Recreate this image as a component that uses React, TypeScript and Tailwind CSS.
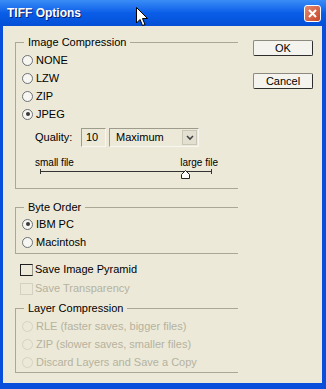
import React from 'react';

const font = { fontFamily: '"Liberation Sans", Arial, sans-serif' };

type GroupProps = { title: string; className?: string; children: React.ReactNode; bodyClass?: string };

// group box: etched left/top/bottom lines, legend sits on the top line
const Group = ({ title, className = '', bodyClass = '', children }: GroupProps) => (
	<div className={className}>
		<div className="flex items-center h-[12px]">
			<div className="w-[9px] border-t border-[#a9a796]" />
			<span className="px-[4px] leading-none text-black">{title}</span>
			<div className="flex-1 border-t border-[#a9a796]" />
		</div>
		<div className={`border-l border-b border-[#a9a796] -mt-[6px] pt-[6px] ${bodyClass}`}>
			{children}
		</div>
	</div>
);

const Radio = ({ label, checked = false, disabled = false, h = 'h-[18px]' }: { label: string; checked?: boolean; disabled?: boolean; h?: string }) => (
	<div className={`flex items-center gap-[3px] pl-[6px] ${h}`}>
		<span
			className={`w-[11px] h-[11px] rounded-full border flex items-center justify-center ${
				disabled ? 'border-[#d6d3c4] bg-[#ece9d8]' : 'border-[#6d7178] bg-[#f7f6f1]'
			}`}
		>
			{checked && <span className="w-[4px] h-[4px] rounded-full bg-[#3a3a3a]" />}
		</span>
		<span className={disabled ? 'text-[#b5b29f]' : 'text-black'}>{label}</span>
	</div>
);

const Cursor = () => (
	<svg className="absolute left-[136px] top-[7px]" width="13" height="21" viewBox="0 0 13 21">
		<path d="M0.5 0.5 L0.5 16 L4 12.5 L6.5 18.5 L9 17.5 L6.5 11.5 L11.5 11.5 Z" fill="#fff" stroke="#000" strokeWidth="1" />
	</svg>
);

const Button = ({ children, className = '' }: { children: React.ReactNode; className?: string }) => (
	<div
		className={`w-[60px] h-[16px] flex items-center justify-center rounded-[2px] border border-[#8c8a80] border-r-[#2e2e2e] border-b-[#2e2e2e] bg-[#f4f3ee] text-black ${className}`}
	>
		{children}
	</div>
);

export default function App() {
	return (
		<div className="relative w-[326px] h-[389px] bg-[#0a4fdc] flex flex-col text-[11px] overflow-hidden" style={font}>
			{/* title bar */}
			<div className="h-[26px] flex items-center justify-between pl-[7px] pr-[5px] bg-gradient-to-b from-[#3a8cf6] via-[#0a5de8] to-[#0450d6]">
				<span className="text-white font-bold text-[12px] [text-shadow:1px_1px_0_#0a1f6a]">TIFF Options</span>
				<div className="w-[17px] h-[17px] rounded-[3px] border border-white bg-gradient-to-br from-[#e58a6e] to-[#c64323] flex items-center justify-center">
					<svg width="9" height="9" viewBox="0 0 9 9">
						<path d="M1 1 L8 8 M8 1 L1 8" stroke="#fff" strokeWidth="2" />
					</svg>
				</div>
			</div>
			<Cursor />

			{/* client area */}
			<div className="flex-1 ml-[3px] mr-[4px] mb-[6px] bg-[#ece9d8] flex pl-[12px] pr-[9px] pt-[10px]">
				<div className="w-[223px] flex flex-col">
					<Group title="Image Compression" bodyClass="pt-[9px] pb-[8px]">
						<Radio label="NONE" />
						<Radio label="LZW" />
						<Radio label="ZIP" />
						<Radio label="JPEG" checked />
						<div className="flex items-center mt-[5px] h-[19px] pl-[19px]">
							<span className="w-[46px]">Quality:</span>
							<div className="w-[25px] h-[19px] border border-[#9d9b8c] border-r-[#f7f6f1] border-b-[#f7f6f1] flex items-center pl-[4px]">10</div>
							<div className="ml-[3px] w-[90px] h-[19px] border border-[#9d9b8c] border-r-[#f7f6f1] border-b-[#f7f6f1] flex items-center justify-between pl-[6px] pr-[1px]">
								<span>Maximum</span>
								<span className="w-[15px] h-[15px] bg-[#e3e0d2] border border-[#c9c6b6] flex items-center justify-center">
									<svg width="8" height="6" viewBox="0 0 8 6">
										<path d="M1 1 L4 4 L7 1" fill="none" stroke="#444" strokeWidth="1.6" />
									</svg>
								</span>
							</div>
						</div>
						<div className="flex justify-between items-center h-[12px] mt-[9px] pl-[19px] w-[202px] text-[10px]">
							<span>small file</span>
							<span>large file</span>
						</div>
						<div className="relative h-[12px] ml-[24px] w-[172px]">
							<div className="absolute left-0 right-0 top-[3px] border-t border-[#333]" />
							<div className="absolute left-0 top-[1px] h-[5px] border-l border-[#333]" />
							<div className="absolute right-0 top-[1px] h-[5px] border-l border-[#333]" />
							<svg className="absolute left-[141px] top-[2px]" width="9" height="9" viewBox="0 0 9 9">
								<path d="M4.5 0.5 L8.5 4.5 L8.5 8.5 L0.5 8.5 L0.5 4.5 Z" fill="#fff" stroke="#222" />
							</svg>
						</div>
					</Group>

					<Group title="Byte Order" className="mt-[12px]" bodyClass="pt-[8px] pb-[2px]">
						<Radio label="IBM PC" checked />
						<Radio label="Macintosh" />
					</Group>

					<div className="mt-[6px] flex items-center h-[19px] pl-[5px] gap-[2px]">
						<span className="w-[13px] h-[12px] border border-[#1e1e1e] border-r-[#9a988a] bg-[#ece9d8]" />
						<span>Save Image Pyramid</span>
					</div>
					<div className="flex items-center h-[19px] pl-[5px] gap-[2px]">
						<span className="w-[13px] h-[12px] border border-[#d4d1c2] bg-[#ece9d8]" />
						<span className="text-[#b5b29f]">Save Transparency</span>
					</div>

					<Group title="Layer Compression" className="mt-[4px]" bodyClass="pt-[9px] pb-[1px]">
						<Radio label="RLE (faster saves, bigger files)" disabled />
						<Radio label="ZIP (slower saves, smaller files)" disabled />
						<Radio label="Discard Layers and Save a Copy" disabled />
					</Group>
				</div>

				<div className="ml-[15px] flex flex-col pt-[4px]">
					<Button>OK</Button>
					<Button className="mt-[17px]">Cancel</Button>
				</div>
			</div>
		</div>
	);
}
